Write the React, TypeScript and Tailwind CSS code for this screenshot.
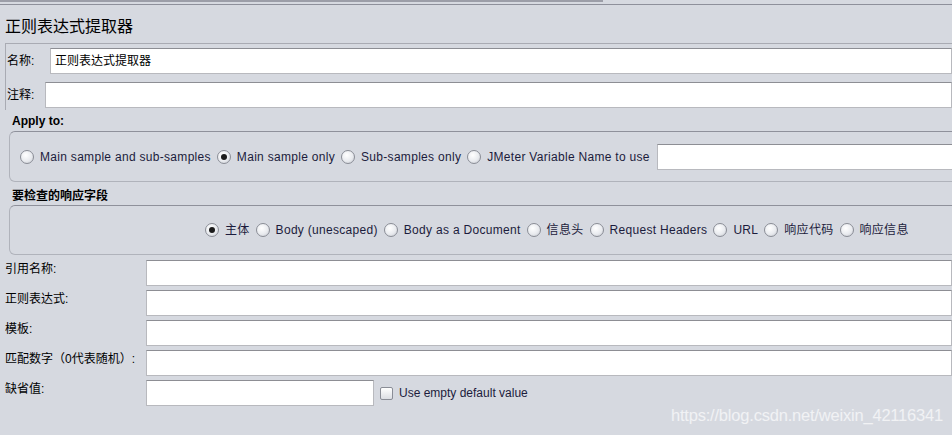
import React from 'react';

const font = { fontFamily: '"Liberation Sans", Arial, "Noto Sans CJK SC", sans-serif' };

const Radio: React.FC<{ checked?: boolean; label: string }> = ({ checked, label }) => (
  <div className="flex items-center gap-[6px] shrink-0">
    <span className="w-[14px] h-[14px] rounded-full border border-[#8a8d96] bg-[radial-gradient(circle_at_40%_35%,_#ffffff_0%,_#e9ebef_55%,_#c4c7ce_100%)] flex items-center justify-center">
      {checked && <span className="w-[6px] h-[6px] rounded-full bg-[#1b1b1b]" />}
    </span>
    <span className="text-[12px] tracking-[0.3px] text-[#1c1c3c] whitespace-nowrap">{label}</span>
  </div>
);

const Field: React.FC<{ className?: string; value?: string }> = ({ className = '', value }) => (
  <div
    className={`h-[26px] bg-white border border-[#b8b9be] border-t-[#8d8e94] flex items-center px-[4px] text-[12px] text-black ${className}`}
  >
    {value}
  </div>
);

const Row: React.FC<{ label: string; short?: boolean; children?: React.ReactNode }> = ({ label, short, children }) => (
  <div className="flex items-start h-[30px]">
    <div className="w-[146px] pl-[5px] text-[12px] text-black shrink-0">{label}</div>
    {short ? (
      <div className="flex items-center gap-[6px]">
        <Field className="w-[228px]" />
        {children}
      </div>
    ) : (
      <Field className="flex-1" />
    )}
  </div>
);

export default function App() {
  return (
    <div className="w-[952px] h-[435px] bg-[#d6d9e0] overflow-hidden relative" style={font}>
      {/* top rule */}
      <div className="h-[2px] w-[603px] bg-[#9c9ea8]" />
      <div className="h-[2px]" />
      <div className="h-[1px] bg-[#8e909b]" />

      <div className="pl-[5px] pt-[12px] h-[38px] text-[16px] text-black leading-[20px]">正则表达式提取器</div>

      {/* name / comment */}
      <div className="ml-[5px] border-t border-l border-[#a9abb3] pt-[4px] h-[67px]">
        <div className="flex items-center h-[25px]">
          <span className="pl-[1px] w-[44px] text-[12px] text-black">名称:</span>
          <Field className="flex-1 h-[25px]" value="正则表达式提取器" />
        </div>
        <div className="flex items-center h-[26px] mt-[9px]">
          <span className="pl-[1px] w-[39px] text-[12px] text-black">注释:</span>
          <Field className="flex-1 h-[26px]" />
        </div>
      </div>

      {/* apply to */}
      <div className="pl-[12px] pt-[4px] text-[12px] font-bold text-black leading-[14px]">Apply to:</div>
      <div className="ml-[9px] mr-[-10px] mt-[3px] h-[51px] rounded-[6px] border border-[#b0b3bb] border-t-[#8f919b] flex items-center pl-[10px] gap-[6px]">
        <Radio label="Main sample and sub-samples" />
        <Radio checked label="Main sample only" />
        <Radio label="Sub-samples only" />
        <Radio label="JMeter Variable Name to use" />
        <Field className="flex-1 h-[26px] ml-[1px]" />
      </div>

      {/* response field */}
      <div className="pl-[12px] pt-[7px] text-[12px] font-bold text-black leading-[14px]">要检查的响应字段</div>
      <div className="ml-[9px] mr-[-10px] mt-[2px] h-[50px] rounded-[6px] border border-[#b0b3bb] border-t-[#8f919b] flex items-center pl-[195px] gap-[6px]">
        <Radio checked label="主体" />
        <Radio label="Body (unescaped)" />
        <Radio label="Body as a Document" />
        <Radio label="信息头" />
        <Radio label="Request Headers" />
        <Radio label="URL" />
        <Radio label="响应代码" />
        <Radio label="响应信息" />
      </div>

      {/* fields */}
      <div className="mt-[5px] flex flex-col">
        <Row label="引用名称:" />
        <Row label="正则表达式:" />
        <Row label="模板:" />
        <Row label="匹配数字（0代表随机）:" />
        <Row label="缺省值:" short>
          <span className="w-[13px] h-[13px] rounded-[2px] border border-[#8a8d96] bg-[linear-gradient(#ffffff,_#dcdee3)]" />
          <span className="text-[12px] text-[#1c1c3c]">Use empty default value</span>
        </Row>
      </div>

      <div className="absolute right-[9px] bottom-[7px] text-[16.5px] text-white/65 tracking-[-0.2px]">
        https://blog.csdn.net/weixin_42116341
      </div>
    </div>
  );
}
